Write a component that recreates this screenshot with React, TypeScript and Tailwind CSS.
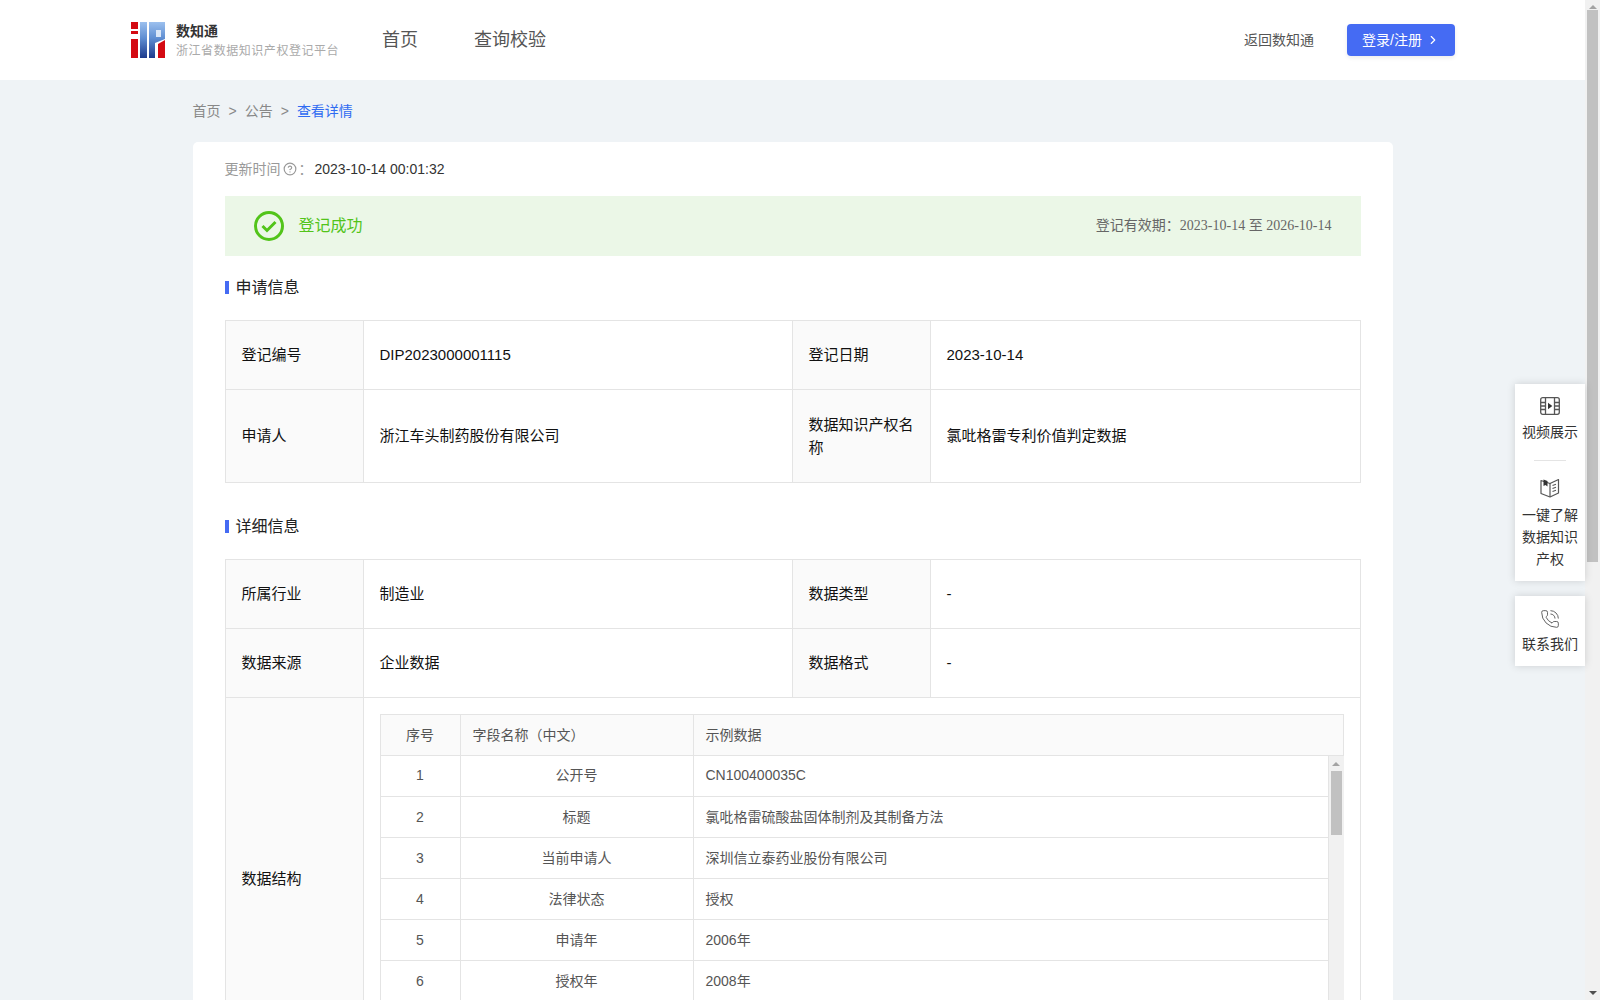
import { ChevronRight, CircleHelp, PhoneCall } from 'lucide-react';

const FONT = 'font-["Liberation_Sans","Noto_Sans_CJK_SC",sans-serif]';

const fieldRows = [
  ['1', '公开号', 'CN100400035C'],
  ['2', '标题', '氯吡格雷硫酸盐固体制剂及其制备方法'],
  ['3', '当前申请人', '深圳信立泰药业股份有限公司'],
  ['4', '法律状态', '授权'],
  ['5', '申请年', '2006年'],
  ['6', '授权年', '2008年'],
];

const Logo = () => (
  <svg width="34" height="36" viewBox="0 0 34 36" className="shrink-0">
    <defs>
      <linearGradient id="logoBlue" x1="0" y1="0" x2="0" y2="1">
        <stop offset="0" stopColor="#9cc0ee" />
        <stop offset="0.45" stopColor="#5f8ed2" />
        <stop offset="1" stopColor="#1d3a8c" />
      </linearGradient>
    </defs>
    <rect x="0" y="0" width="7" height="7" fill="#d40a12" />
    <rect x="0" y="9" width="7" height="3" fill="#d40a12" />
    <rect x="0" y="17" width="7" height="19" fill="#d40a12" />
    <rect x="9" y="0" width="7" height="36" fill="url(#logoBlue)" />
    <path d="M18 0H34V17L24 21V36H18Z" fill="url(#logoBlue)" />
    <rect x="25" y="8" width="5" height="7" fill="#dbe7f8" />
    <path d="M27 36V22L34 18V36Z" fill="#d40a12" />
  </svg>
);

const FilmIcon = () => (
  <svg width="20" height="18" viewBox="0 0 20 18" fill="none" stroke="#555" strokeWidth="1.3">
    <rect x="0.7" y="0.7" width="18.6" height="16.6" rx="2" />
    <path d="M5.5 1V17M14.5 1V17M1 5.5H5.5M1 9H5.5M1 12.5H5.5M14.5 5.5H19M14.5 9H19M14.5 12.5H19" />
    <path d="M8 5.8L12.3 9L8 12.2Z" fill="#333" stroke="none" />
  </svg>
);

const BookIcon = () => (
  <svg width="20" height="20" viewBox="0 0 20 20" fill="none" stroke="#555" strokeWidth="1.2">
    <path d="M1 2.5L10 5.5L18.5 1.5V15L10 19L1 15.5Z" strokeLinejoin="round" />
    <path d="M10 5.5V19" />
    <path d="M3.5 1.5L7.5 3V8.5L5.5 7L3.5 8Z" fill="#333" stroke="none" />
    <path d="M12.5 7.5L16 6.3M12.5 10.5L16 9.3M12.5 13.5L16 12.3" />
  </svg>
);

const SuccessIcon = () => (
  <svg width="30" height="30" viewBox="0 0 30 30" fill="none" stroke="#52c41a">
    <circle cx="15" cy="15" r="13.5" strokeWidth="3" />
    <path d="M8.5 15L13 19.5L21.5 11" strokeWidth="3" />
  </svg>
);

const SectionTitle = ({ children, className }: { children: string; className: string }) => (
  <div className={`flex h-[22px] items-center gap-[7px] ${className}`}>
    <span className="h-[13px] w-1 bg-[#456bf3]" />
    <span className="pt-px text-base text-[#222]">{children}</span>
  </div>
);

const Label = ({ children }: { children: React.ReactNode }) => (
  <td className="border border-[#e4e4e4] bg-[#fafafa] px-4 pb-px align-middle text-[15px] leading-[23px] text-[#111]">
    {children}
  </td>
);

const Value = ({ children }: { children: React.ReactNode }) => (
  <td className="border border-[#e4e4e4] px-4 pb-px align-middle text-[15px] leading-[23px] text-[#111]">{children}</td>
);

const OuterCols = () => (
  <colgroup>
    <col className="w-[138px]" />
    <col className="w-[429px]" />
    <col className="w-[138px]" />
    <col className="w-[430px]" />
  </colgroup>
);

const FieldCols = () => (
  <colgroup>
    <col className="w-[80px]" />
    <col className="w-[233px]" />
    <col />
  </colgroup>
);

const FieldTable = () => (
  <div className="w-[964px] text-sm text-[#555]">
    <table className="w-full table-fixed border-collapse">
      <FieldCols />
      <thead>
        <tr className="h-[41px] bg-[#fafafa]">
          <th className="border border-[#e4e4e4] pb-px text-center font-normal">序号</th>
          <th className="border border-[#e4e4e4] px-3 pb-px text-left font-normal">字段名称（中文）</th>
          <th className="border border-[#e4e4e4] px-3 pb-px text-left font-normal">示例数据</th>
        </tr>
      </thead>
    </table>
    <div className="flex h-[288px] overflow-hidden">
      <table className="-mt-px w-[949px] table-fixed self-start border-collapse">
        <FieldCols />
        <tbody>
          {fieldRows.map(([no, name, sample]) => (
            <tr key={no} className="h-[41px]">
              <td className="border border-t-0 border-[#e4e4e4] text-center">{no}</td>
              <td className="border border-t-0 border-[#e4e4e4] px-3 text-center">{name}</td>
              <td className="border border-t-0 border-[#e4e4e4] px-3">{sample}</td>
            </tr>
          ))}
        </tbody>
      </table>
      <div className="flex w-[15px] flex-col items-center bg-[#f1f1f1]">
        <span className="mt-[6px] h-0 w-0 border-x-4 border-b-4 border-x-transparent border-b-[#a3a3a3]" />
        <span className="mt-[5px] h-[64px] w-[11px] bg-[#c1c1c1]" />
      </div>
    </div>
  </div>
);

const PageScrollbar = () => (
  <div className="flex w-[15px] shrink-0 flex-col items-center bg-[#f1f1f1]">
    <span className="mt-[5px] h-0 w-0 border-x-4 border-b-4 border-x-transparent border-b-[#a3a3a3]" />
    <span className="mt-[1px] h-[552px] w-[11px] bg-[#c1c1c1]" />
    <span className="mt-auto mb-[5px] h-0 w-0 border-x-4 border-t-4 border-x-transparent border-t-[#505050]" />
  </div>
);

const SidePanel = () => (
  <div className="absolute top-[384px] right-[15px] flex w-[70px] flex-col gap-[15px] text-center text-sm text-[#333]">
    <div className="flex flex-col items-center bg-white pt-[13px] pb-[11px] shadow-[0_0_8px_rgba(0,0,0,0.15)]">
      <FilmIcon />
      <div className="mt-[6px] leading-[22px]">视频展示</div>
      <div className="mt-[17px] h-px w-8 bg-[#e4e4e4]" />
      <div className="mt-[17px]">
        <BookIcon />
      </div>
      <div className="mt-[6px] leading-[22px]">
        一键了解
        <br />
        数据知识
        <br />
        产权
      </div>
    </div>
    <div className="flex h-[70px] flex-col items-center bg-white pt-[13px] shadow-[0_0_8px_rgba(0,0,0,0.15)]">
      <PhoneCall size={20} strokeWidth={1.1} color="#555" />
      <div className="mt-[4px] leading-[22px]">联系我们</div>
    </div>
  </div>
);

export default function App() {
  return (
    <div className={`relative flex h-screen w-full overflow-hidden bg-[#eff3f6] text-sm ${FONT}`}>
      <div className="min-w-0 flex-1 overflow-hidden">
        <header className="flex h-20 items-center bg-white pr-[130px] pl-[131px]">
          <Logo />
          <div className="ml-[11px] w-[163px] whitespace-nowrap">
            <div className="text-sm leading-5 font-bold text-[#333]">数知通</div>
            <div className="mt-[1px] text-xs leading-[18px] tracking-[0.55px] text-[#aaa]">浙江省数据知识产权登记平台</div>
          </div>
          <nav className="ml-[43px] flex gap-[56px] text-lg text-[#555]">
            <a>首页</a>
            <a>查询校验</a>
          </nav>
          <a className="ml-auto text-[#555]">返回数知通</a>
          <button className="ml-[33px] flex h-8 w-[108px] items-center justify-center gap-[4px] rounded-sm bg-[#456bf3] pb-px text-white shadow-[0_2px_4px_rgba(0,0,0,0.08)]">
            登录/注册
            <ChevronRight size={14} />
          </button>
        </header>

        <main className="mx-auto w-[1200px]">
          <nav className="flex h-[62px] items-center gap-2 pb-px text-[#888]">
            <a>首页</a>
            <span>&gt;</span>
            <a>公告</a>
            <span>&gt;</span>
            <a className="text-[#2f6bf2]">查看详情</a>
          </nav>

          <section className="rounded-t-[5px] bg-white px-8 pt-[17px] pb-8">
            <div className="flex h-5 items-center text-[#999]">
              更新时间
              <CircleHelp size={14} className="ml-[2px]" />
              <span className="w-[18px] pl-[2px]">：</span>
              <span className="text-[#333]">2023-10-14 00:01:32</span>
            </div>

            <div className="mt-[17px] flex h-[60px] items-center bg-[#ebf7e7] pr-[29px] pl-[29px]">
              <SuccessIcon />
              <span className="ml-[15px] pb-px text-base text-[#52c41a]">登记成功</span>
              <span className="ml-auto pb-px text-[#666]">
                登记有效期：
                <span className='font-["Liberation_Serif","Noto_Sans_CJK_SC",serif]'>2023-10-14 至 2026-10-14</span>
              </span>
            </div>

            <SectionTitle className="mt-5 mb-[22px]">申请信息</SectionTitle>
            <table className="w-[1135px] table-fixed border-collapse">
              <OuterCols />
              <tbody>
                <tr className="h-[69px]">
                  <Label>登记编号</Label>
                  <Value>DIP2023000001115</Value>
                  <Label>登记日期</Label>
                  <Value>2023-10-14</Value>
                </tr>
                <tr className="h-[93px]">
                  <Label>申请人</Label>
                  <Value>浙江车头制药股份有限公司</Value>
                  <Label>数据知识产权名称</Label>
                  <Value>氯吡格雷专利价值判定数据</Value>
                </tr>
              </tbody>
            </table>

            <SectionTitle className="mt-8 mb-[22px]">详细信息</SectionTitle>
            <table className="w-[1135px] table-fixed border-collapse">
              <OuterCols />
              <tbody>
                <tr className="h-[69px]">
                  <Label>所属行业</Label>
                  <Value>制造业</Value>
                  <Label>数据类型</Label>
                  <Value>-</Value>
                </tr>
                <tr className="h-[69px]">
                  <Label>数据来源</Label>
                  <Value>企业数据</Value>
                  <Label>数据格式</Label>
                  <Value>-</Value>
                </tr>
                <tr>
                  <Label>数据结构</Label>
                  <td colSpan={3} className="border border-[#e4e4e4] p-4">
                    <FieldTable />
                  </td>
                </tr>
              </tbody>
            </table>
          </section>
        </main>
      </div>
      <PageScrollbar />
      <SidePanel />
    </div>
  );
}
